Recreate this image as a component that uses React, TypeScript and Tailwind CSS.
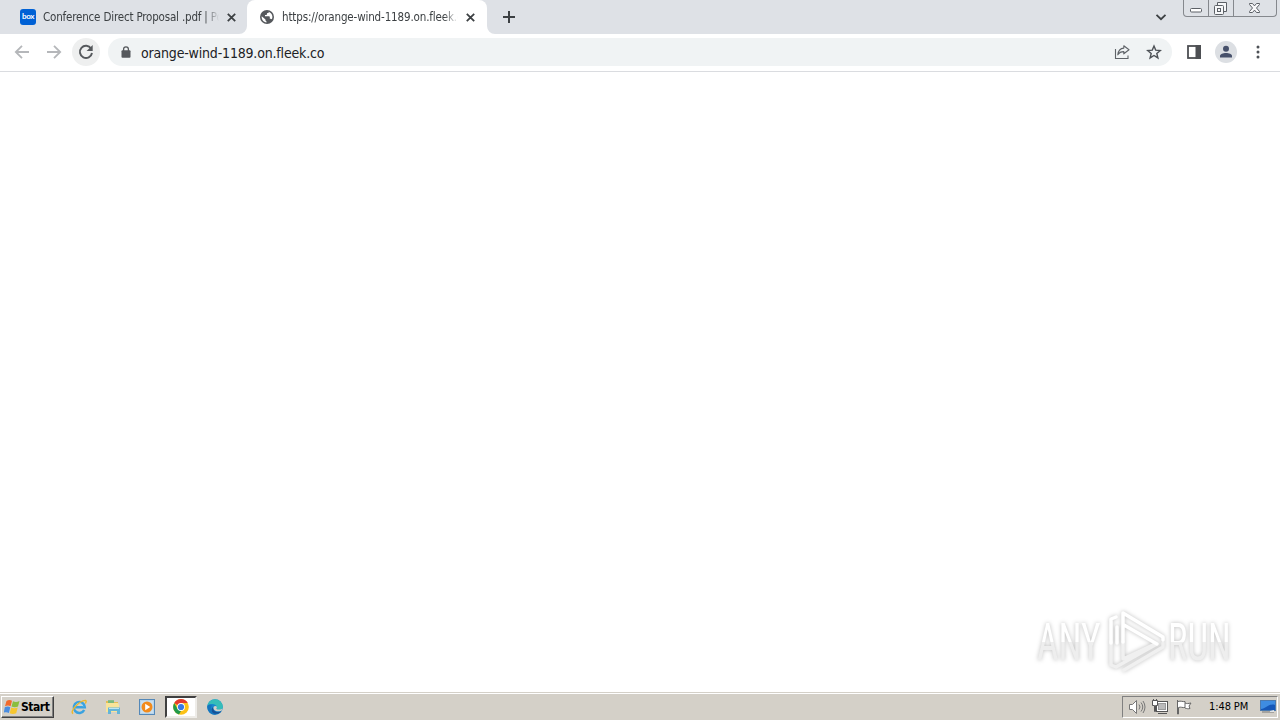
import React from 'react';
import clsx from 'clsx';

interface TabProps {
  title: string;
  icon: React.ReactNode;
  active?: boolean;
}

const CloseIcon = () => (
  <svg className="w-[9px] h-[9px] shrink-0" viewBox="0 0 9 9" stroke="#3c4043" strokeWidth="1.8">
    <path d="M.8.8l7.4 7.4M8.2.8L.8 8.2" />
  </svg>
);

const BoxIcon = () => (
  <span className="w-4 h-4 shrink-0 rounded-[3px] bg-[#0061d5] text-white text-[8px] leading-[15px] font-bold tracking-[-0.4px] text-center font-['Lato']">
    box
  </span>
);

const GlobeIcon = () => (
  <svg className="w-4 h-4 shrink-0" viewBox="0 0 16 16">
    <circle cx="8" cy="8" r="7" fill="#55585c" />
    <path d="M2.7 7.2l3.8 3.3v1.1l1 .9v.9C4.5 13.1 2.3 10.3 2.7 7.2z" fill="#fff" />
    <path d="M9.6 2.8c1.9.6 3.6 2.4 3.8 4.7.1 1-.1 2-.6 2.8-.3-.4-.8-.6-1.3-.6h-.7V8c0-.5-.3-.8-.8-.8H6V5.9h1.3c.5 0 .8-.3.8-.8V4.1h.9c.6 0 .9-.6.6-1.3z" fill="#fff" />
  </svg>
);

const Tab: React.FC<TabProps> = ({ title, icon, active }) => (
  <div
    className={clsx(
      'relative h-[34px] flex items-center',
      active ? 'w-[240px] pl-3 pr-3 bg-white rounded-t-lg' : 'w-[247px] pl-5 pr-[11px]'
    )}
  >
    {active && (
      <>
        <svg className="absolute -left-2 bottom-0 w-2 h-2" viewBox="0 0 8 8"><path d="M8 0v8H0a8 8 0 0 0 8-8" fill="#fff" /></svg>
        <svg className="absolute -right-2 bottom-0 w-2 h-2" viewBox="0 0 8 8"><path d="M0 0v8h8a8 8 0 0 1-8-8" fill="#fff" /></svg>
      </>
    )}
    {icon}
    <span
      className={clsx(
        'ml-[7px] w-[176px] mr-auto whitespace-nowrap text-[11.5px] leading-4 text-[#3c4043] [mask-image:linear-gradient(to_right,black_92%,transparent)]',
        active ? 'tracking-[-0.14px]' : 'tracking-[-0.18px]'
      )}
    >
      {title}
    </span>
    <CloseIcon />
  </div>
);

const WindowControls = () => (
  <div className="ml-auto mr-[3px] flex h-[17px] w-[94px] self-start rounded-b-[4px] border border-t-0 border-[#85888d]">
    <svg className="w-[92px] h-4" viewBox="0 0 92 16" fill="none" stroke="#5c6066">
      <path d="M24.5 0v16M49.5 0v16" stroke="#85888d" />
      <rect x="6.5" y="8.5" width="11" height="3.5" rx="1" fill="#fff" />
      <path d="M33.5 5V2.5h9v9h-3" fill="#f6f7f9" />
      <rect x="30.5" y="5.5" width="9" height="9" rx="1" fill="#f6f7f9" />
      <rect x="33.5" y="8.5" width="3" height="3" />
      <path d="M65.5 3.5h3l2 2.4 2-2.4h3v1l-3 3.5 3 3.5v1h-3l-2-2.4-2 2.4h-3v-1l3-3.5-3-3.5z" fill="#f8f8fa" />
    </svg>
  </div>
);

const TabStrip = () => (
  <div className="flex items-center h-[34px] bg-[#dee1e6]">
    <Tab title="Conference Direct Proposal .pdf | Po" icon={<BoxIcon />} />
    <Tab title="https://orange-wind-1189.on.fleek.c" icon={<GlobeIcon />} active />
    <svg className="ml-4 w-3 h-3" viewBox="0 0 12 12" stroke="#3c4043" strokeWidth="2">
      <path d="M6 0v12M0 6h12" />
    </svg>
    <svg className="ml-[640px] w-3 h-2" viewBox="0 0 12 8" fill="none" stroke="#3c4043" strokeWidth="1.8">
      <path d="M1.5 1.8L6 6.2l4.5-4.4" />
    </svg>
    <WindowControls />
  </div>
);

const Toolbar = () => (
  <div className="flex items-center h-[38px] pb-px bg-white border-b border-[#dadce0]">
    <svg className="ml-[14px] w-4 h-4" viewBox="0 0 16 16" fill="none" stroke="#b5b7ba" strokeWidth="1.8">
      <path d="M15 8H2M8 1.8L1.8 8 8 14.2" />
    </svg>
    <svg className="ml-4 w-4 h-4" viewBox="0 0 16 16" fill="none" stroke="#b5b7ba" strokeWidth="1.8">
      <path d="M1 8h13M8 1.8L14.2 8 8 14.2" />
    </svg>
    <div className="ml-[10px] w-7 h-7 rounded-full bg-[#eeefef] flex items-center justify-center">
      <svg className="w-4 h-4" viewBox="0 0 16 16">
        <path d="M13.1 4.5A6.1 6.1 0 1 0 14 9" fill="none" stroke="#55585c" strokeWidth="1.9" />
        <path d="M14.7 1v6.1H8.6z" fill="#55585c" />
      </svg>
    </div>
    <div className="ml-2 w-[1064px] h-7 rounded-full bg-[#f0f3f4] flex items-center">
      <svg className="ml-[13px] w-[10px] h-3" viewBox="0 0 10 12">
        <path d="M2.6 5V3.2a2.4 2.4 0 0 1 4.8 0V5" fill="none" stroke="#55585c" strokeWidth="1.3" />
        <rect x="0.5" y="4.3" width="9" height="7.5" rx="1" fill="#55585c" />
      </svg>
      <span className="ml-[10px] pt-px text-[14px] leading-5 tracking-[-0.18px] text-[#202124] whitespace-nowrap">
        orange-wind-1189.on.fleek.co
      </span>
      <svg className="ml-auto w-4 h-4" viewBox="0 0 16 16" fill="none" stroke="#5f6368" strokeWidth="1.1">
        <path d="M1.5 5v9.5H14v-3" />
        <path d="M9.8 1.8L15 5.8l-5.2 4V7.6c-2.5 0-4.6.8-6 3.2.4-3.5 2.5-6.5 6-6.7z" strokeLinejoin="round" />
      </svg>
      <svg className="ml-4 mr-[10px] w-4 h-4" viewBox="0 0 16 16" fill="none" stroke="#4d5156" strokeWidth="1.4">
        <path d="M8 2l1.7 4.1 4.6.4-3.5 3 1.1 4.4L8 11.5l-3.9 2.4 1.1-4.4-3.5-3 4.6-.4z" />
      </svg>
    </div>
    <svg className="ml-[15px] w-[14px] h-[14px]" viewBox="0 0 14 14">
      <rect x="1" y="1" width="12" height="12" fill="#fff" stroke="#4d4f53" strokeWidth="1.8" />
      <rect x="8.5" y="0" width="5.5" height="14" fill="#4d4f53" />
    </svg>
    <svg className="ml-[14px] w-[22px] h-[22px]" viewBox="0 0 22 22" fill="#47516b">
      <circle cx="11" cy="11" r="11" fill="#dcdfe3" />
      <circle cx="11" cy="7.7" r="3" />
      <path d="M5 16.5v-1.4c0-4 12-4 12 0v1.4z" />
    </svg>
    <svg className="ml-[19px] w-1 h-[14px]" viewBox="0 0 4 14" fill="#4d5156">
      <circle cx="2" cy="2" r="1.5" />
      <circle cx="2" cy="7" r="1.5" />
      <circle cx="2" cy="12" r="1.5" />
    </svg>
  </div>
);

const Watermark = () => (
  <div className="mt-auto ml-auto mr-[46px] mb-[18px] flex items-center h-[66px] font-['Roboto'] text-[51px] leading-none text-white drop-shadow-[0_0_2px_rgba(0,0,0,0.26)]">
    <span className="w-[67px] pt-[3px] whitespace-nowrap">
      <span className="block w-max -ml-[3px] origin-left scale-x-[0.73] bg-[linear-gradient(#fff_50%,#eeeeee_50%)] bg-clip-text text-transparent">ANY</span>
    </span>
    <svg className="-ml-[2px] w-[60px] h-[66px]" viewBox="0 0 60 66" fill="none" strokeLinejoin="round" strokeLinecap="round">
      <path d="M6 34v23l5 2 39-22M18 34v17l32-15M19 62l39-23v-4" stroke="#f0f0f0" strokeWidth="3.5" />
      <path d="M11 9L6 11v24M12 19v16M18 34V5l40 24v3M19 17l33 19" stroke="#fff" strokeWidth="3.5" />
    </svg>
    <span className="ml-[3px] w-[66px] pt-[3px] whitespace-nowrap">
      <span className="block w-max origin-left scale-x-[0.72] bg-[linear-gradient(#fff_50%,#eeeeee_50%)] bg-clip-text text-transparent">RUN</span>
    </span>
  </div>
);

const StartButton = () => (
  <div className="ml-px w-[53px] h-[22px] flex items-center bg-[#d4d0c8] border border-t-white border-l-white border-r-[#404040] border-b-[#404040] shadow-[inset_-1px_-1px_#808080]">
    <svg className="ml-[2px] w-4 h-4" viewBox="0 0 16 16">
      <path d="M2.5 2c2-1.5 4-1.2 5.5-.2L6.6 7.3C5 6.300 3 6.300 1 7.300z" fill="#f26a2c" />
      <path d="M9 2.200c2 1 4 1 6.500-.2L14 7.600c-2 1-4.500 1-6.500 0z" fill="#8abe3e" />
      <path d="M.8 8.300c2-1 4-1 5.500 0L4.900 14C3.300 13 1.500 13-.2 13.700z" fill="#4a8de0" />
      <path d="M7.200 8.600c2 1 4.300 1 6.500 0l-1.500 5.600c-2 1-4.500 1-6.500 0z" fill="#f6c62f" />
    </svg>
    <span className="ml-px text-[12px] leading-4 font-bold tracking-[-0.45px] text-black">Start</span>
  </div>
);

const QuickLaunch = () => (
  <>
    <svg className="ml-[17px] w-4 h-4" viewBox="0 0 16 16" fill="none">
      <path d="M13.2 11A5.5 5.5 0 1 1 13.8 8.3H4" stroke="#3aa2e0" strokeWidth="2.5" />
      <path d="M12 7.3A4 4 0 0 0 4.4 7" stroke="#9bdaf7" />
      <path d="M2.2 14.5C-2 13 8 1.7 14.3 1.4c1.5.2.7 2.2 0 3.1" stroke="#edb72b" strokeWidth="1.4" />
    </svg>
    <svg className="ml-[18px] w-4 h-4" viewBox="0 0 16 16">
      <path d="M1 2h5l1 1h6v10H1z" fill="#e4bd55" />
      <path d="M3 1.2h6v3H3z" fill="#79b97f" />
      <path d="M1 4h12l1 2v7H1z" fill="#f8e49a" />
      <path d="M3 8.5h12V15h-3v-3H6v3H3z" fill="#65b5d8" />
      <path d="M4 9.5h10" stroke="#bce4f3" />
    </svg>
    <svg className="ml-[18px] w-4 h-4" viewBox="0 0 16 16">
      <rect x="0.5" y="0.5" width="15" height="15" fill="#b6d4eb" stroke="#5488b8" />
      <rect x="2" y="2" width="12" height="12" fill="#c9dfef" />
      <circle cx="8" cy="8" r="5.5" fill="#f28b1c" />
      <path d="M6.2 4.8L11.2 8l-5 3.2z" fill="#fff" />
    </svg>
    <div className="ml-[10px] w-8 h-[22px] bg-white border-2 border-t-[#404040] border-l-[#404040] border-r-[#eeece8] border-b-[#eeece8] flex items-center justify-center">
      <svg className="w-4 h-4" viewBox="0 0 16 16">
        <circle cx="8" cy="8" r="7.8" fill="#fbc116" />
        <path d="M8 8L1.2 4.1A7.8 7.8 0 0 1 14.8 4.1H8z" fill="#e33b2e" />
        <path d="M1.2 4.1L4.6 10l3.4 2-2 3.5A7.8 7.8 0 0 1 1.2 4.1z" fill="#229a4b" />
        <circle cx="8" cy="8" r="3.9" fill="#fff" />
        <circle cx="8" cy="8" r="3.1" fill="#3779e5" />
      </svg>
    </div>
    <svg className="ml-[10px] w-4 h-4" viewBox="0 0 16 16">
      <circle cx="8" cy="8" r="7.8" fill="#1587ce" />
      <path d="M.3 7A7.8 7.8 0 0 1 15.8 7.5C16 10 14 11 11.5 10.8 9 10.6 9.5 9.5 10 8.5 10 5 3 3.5.3 7z" fill="#35bdb9" />
      <path d="M5 6.5C2 10 5 15 10 15.5 4 17 0 12 .3 7c1-1.5 3-1.8 4.7-.5z" fill="#1674bd" />
      <path d="M6.6 7.5c-1.8 4 3 7 8 4.5-3 5-11.5 3-9.8-2.5z" fill="#175197" />
      <path d="M8 7c2 0 2.4 1 1.5 2.3-.6 1.2 2.4 2 5.7.5l-.7 2C9 13.5 5.7 11 6.6 7.8z" fill="#d4d0c8" />
    </svg>
  </>
);

const Tray = () => (
  <div className="ml-auto mr-[2px] w-[156px] h-[22px] flex items-center border border-t-[#808080] border-l-[#808080] border-r-white border-b-white">
    <svg className="ml-[6px] w-[17px] h-4" viewBox="0 0 17 16" fill="none" stroke="#777">
      <path d="M.5 5.5h3l4-4v13l-4-4h-3z" fill="#fff" />
      <path d="M10 5.5q2 2.5 0 5M12 3.5q3.5 4.5 0 9M14 2q4 6 0 12" />
    </svg>
    <svg className="ml-[6px] w-[17px] h-4" viewBox="0 0 17 16" fill="none" stroke="#555">
      <rect x="4.5" y="2.5" width="11" height="10" fill="#fff" />
      <rect x="6.5" y="4.5" width="7" height="6" fill="#bbb" stroke="#999" />
      <path d="M6 14.5h9" />
      <path d="M.5 1.5h5v5h-2v6h-1v-6h-2zM1.5 0v2M4.500 0v2" fill="#fff" />
    </svg>
    <svg className="ml-[7px] w-4 h-4" viewBox="0 0 16 16" fill="#fff" stroke="#666">
      <path d="M1.5 1v14h1V8.5c2.5-1 4 .5 6.500 0v-6c-2.500.5-4-1-7 0M9 4c2 1 3 .5 6 0l-2 3 1 2.500c-2 .5-3 .2-5-.5" />
    </svg>
    <span className="ml-[17px] w-[42px] text-[11px] leading-4 tracking-[-0.1px] text-black whitespace-nowrap">1:48 PM</span>
    <svg className="ml-[9px] w-4 h-[15px]" viewBox="0 0 16 15">
      <rect x="0.5" y="1.5" width="15" height="10" fill="#1557b8" stroke="#4c7aae" />
      <path d="M1 2h14v4C9 4 6 10 1 10z" fill="#3e8ce1" />
      <path d="M2 13h12" stroke="#777" />
      <path d="M10 12l4-1v2h-4z" fill="#e1e5e9" />
    </svg>
  </div>
);

const App: React.FC = () => (
  <div className="w-[1280px] h-[720px] flex flex-col overflow-hidden bg-white font-['DejaVu_Sans_Condensed','DejaVu_Sans',sans-serif] [font-stretch:condensed]">
    <TabStrip />
    <Toolbar />
    <div className="flex-1 flex flex-col">
      <Watermark />
    </div>
    <div className="h-7 pt-px pb-px flex items-center bg-[#d4d0c8] border-t border-[#d4d0c8] shadow-[inset_0_1px_#fff]">
      <StartButton />
      <QuickLaunch />
      <Tray />
    </div>
  </div>
);

export default App;
